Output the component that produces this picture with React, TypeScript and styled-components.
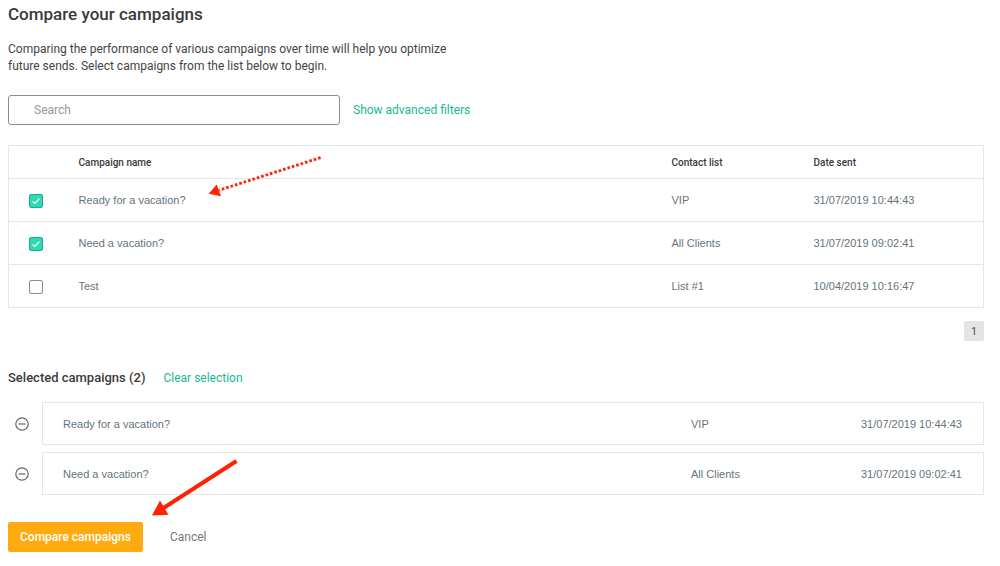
import React, { useState } from "react";
import styled, { createGlobalStyle } from "styled-components";

const GlobalStyle = createGlobalStyle`
  *, *::before, *::after { box-sizing: border-box; }
  body {
    margin: 0;
    background: #fff;
    color: #3a3a3a;
    font-family: Roboto, "Liberation Sans", sans-serif;
    font-size: 12px;
  }
`;

const Page = styled.main`
  position: relative;
  padding: 3px 16px 12px 8px;
`;

const Title = styled.h1`
  margin: 0;
  font-size: 17px;
  line-height: 22px;
  font-weight: 500;
`;

const Intro = styled.p`
  margin: 16px 0 20px;
  max-width: 440px;
  line-height: 17px;
  color: #444;
`;

const SearchRow = styled.form`
  display: flex;
  align-items: center;
  gap: 13px;
  margin-bottom: 20px;
`;

const SearchInput = styled.input`
  flex: 0 1 332px;
  min-width: 0;
  height: 30px;
  padding: 0 25px;
  border: 1px solid #8c8c8c;
  border-radius: 3px;
  font: inherit;
  color: #444;
  &::placeholder { color: #999; opacity: 1; }
`;

const TextLink = styled.a`
  color: #18b795;
  font-size: 12px;
  text-decoration: none;
`;

const Table = styled.table`
  width: 100%;
  table-layout: fixed;
  border-collapse: collapse;
  border: 1px solid #e6e6e6;
`;

const HeadCell = styled.th<{ $width?: number }>`
  width: ${(p) => (p.$width ? `${p.$width}px` : "auto")};
  height: 33px;
  padding: 0;
  font-size: 10px;
  font-weight: 500;
  text-align: left;
`;

const Row = styled.tr`
  border-top: 1px solid #e6e6e6;
`;

const Cell = styled.td`
  height: 43px;
  padding: 0;
  font-family: "Liberation Sans", Arial, sans-serif;
  font-size: 11px;
  color: #66737b;
`;

const CheckCell = styled(Cell)`
  padding: 2px 0 0 20px;
`;

const CheckLabel = styled.label`
  display: grid;
  width: 14px;
  height: 14px;
`;

const CheckInput = styled.input`
  grid-area: 1 / 1;
  appearance: none;
  width: 14px;
  height: 14px;
  margin: 0;
  border: 1px solid #8c8c8c;
  border-radius: 2px;
  background: #fff;
  &:checked { border-color: #12b08e; background: #30d8b4; }
`;

const CheckMark = styled.svg`
  grid-area: 1 / 1;
  width: 14px;
  height: 14px;
  pointer-events: none;
`;

const Pager = styled.nav`
  display: flex;
  justify-content: flex-end;
  margin: 13px 0 26px;
`;

const PageButton = styled.button`
  width: 20px;
  height: 20px;
  padding: 0;
  border: 0;
  border-radius: 2px;
  background: #e4e4e4;
  color: #444;
  font: inherit;
  font-size: 10px;
`;

const SelectedHeader = styled.header`
  display: flex;
  align-items: center;
  gap: 18px;
  margin-bottom: 13px;
`;

const SectionTitle = styled.h2`
  margin: 0;
  font-size: 13px;
  line-height: 22px;
  font-weight: 500;
`;

const SelectedList = styled.ul`
  display: grid;
  gap: 7px;
  margin: 0 0 27px;
  padding: 0;
  list-style: none;
`;

const SelectedItem = styled.li`
  display: flex;
  align-items: center;
  gap: 13px;
`;

const RemoveButton = styled.button`
  flex: none;
  display: flex;
  justify-content: flex-end;
  width: 21px;
  padding: 0;
  border: 0;
  background: none;
  color: #666;
`;

const SelectedCard = styled.div`
  flex: 1;
  display: grid;
  grid-template-columns: 1fr 170px 102px;
  align-items: center;
  height: 43px;
  padding: 0 20px;
  border: 1px solid #e6e6e6;
  font-family: "Liberation Sans", Arial, sans-serif;
  font-size: 11px;
  color: #66737b;
`;

const Actions = styled.div`
  display: flex;
  align-items: center;
  gap: 27px;
`;

const PrimaryButton = styled.button`
  height: 30px;
  padding: 0 12px;
  border: 0;
  border-radius: 2px;
  background: #ffab0f;
  color: #fff;
  font: inherit;
  font-weight: 500;
`;

const PlainButton = styled.button`
  padding: 0;
  border: 0;
  background: none;
  color: #777;
  font: inherit;
`;

const Annotations = styled.svg`
  position: absolute;
  top: 0;
  left: 0;
  pointer-events: none;
`;

type Campaign = { name: string; list: string; sent: string };

const campaigns: Campaign[] = [
  { name: "Ready for a vacation?", list: "VIP", sent: "31/07/2019 10:44:43" },
  { name: "Need a vacation?", list: "All Clients", sent: "31/07/2019 09:02:41" },
  { name: "Test", list: "List #1", sent: "10/04/2019 10:16:47" },
];

export default function App() {
  const [selected, setSelected] = useState<boolean[]>([true, true, false]);
  const toggle = (index: number) =>
    setSelected((prev) => prev.map((on, i) => (i === index ? !on : on)));
  const count = selected.filter(Boolean).length;

  return (
    <Page>
      <GlobalStyle />
      <Title>Compare your campaigns</Title>
      <Intro>
        Comparing the performance of various campaigns over time will help you optimize
        <br />
        future sends. Select campaigns from the list below to begin.
      </Intro>

      <SearchRow onSubmit={(e) => e.preventDefault()}>
        <SearchInput type="text" placeholder="Search" aria-label="Search" />
        <TextLink href="#filters">Show advanced filters</TextLink>
      </SearchRow>

      <Table>
        <thead>
          <tr>
            <HeadCell $width={70} />
            <HeadCell scope="col">Campaign name</HeadCell>
            <HeadCell scope="col" $width={142}>Contact list</HeadCell>
            <HeadCell scope="col" $width={170}>Date sent</HeadCell>
          </tr>
        </thead>
        <tbody>
          {campaigns.map((c, i) => (
            <Row key={c.name}>
              <CheckCell>
                <CheckLabel>
                  <CheckInput
                    type="checkbox"
                    aria-label={c.name}
                    checked={selected[i]}
                    onChange={() => toggle(i)}
                  />
                  {selected[i] && (
                    <CheckMark viewBox="0 0 14 14" fill="none" stroke="#fff" strokeWidth="1.2">
                      <path d="M3.6 7.3l2.2 2.2 4.6-4.9" />
                    </CheckMark>
                  )}
                </CheckLabel>
              </CheckCell>
              <Cell>{c.name}</Cell>
              <Cell>{c.list}</Cell>
              <Cell>{c.sent}</Cell>
            </Row>
          ))}
        </tbody>
      </Table>

      <Pager aria-label="Pages">
        <PageButton type="button">1</PageButton>
      </Pager>

      <SelectedHeader>
        <SectionTitle>Selected campaigns ({count})</SectionTitle>
        <TextLink href="#clear" onClick={() => setSelected([false, false, false])}>
          Clear selection
        </TextLink>
      </SelectedHeader>

      <SelectedList>
        {campaigns.map((c, i) =>
          selected[i] ? (
            <SelectedItem key={c.name}>
              <RemoveButton type="button" aria-label={`Remove ${c.name}`} onClick={() => toggle(i)}>
                <svg width="14" height="14" viewBox="0 0 14 14" fill="none" stroke="currentColor" strokeWidth="1.2">
                  <circle cx="7" cy="7" r="6.2" />
                  <path d="M3.6 7h6.8" />
                </svg>
              </RemoveButton>
              <SelectedCard>
                <span>{c.name}</span>
                <span>{c.list}</span>
                <span>{c.sent}</span>
              </SelectedCard>
            </SelectedItem>
          ) : null
        )}
      </SelectedList>

      <Actions>
        <PrimaryButton type="button">Compare campaigns</PrimaryButton>
        <PlainButton type="button">Cancel</PlainButton>
      </Actions>

      <Annotations width="340" height="530" viewBox="0 0 340 530" aria-hidden="true">
        <path d="M320.6 157.6L219 190.2" stroke="#ff2200" strokeWidth="2.8" strokeDasharray="2.6 2" />
        <path d="M208.7 193.8L216.7 184.6L221 196.2Z" fill="#ff2200" />
        <path d="M236.5 461L162 509" stroke="#ff2200" strokeWidth="4" />
        <path d="M152 515.5L160 500.5L168.5 514.7Z" fill="#ff2200" />
      </Annotations>
    </Page>
  );
}
